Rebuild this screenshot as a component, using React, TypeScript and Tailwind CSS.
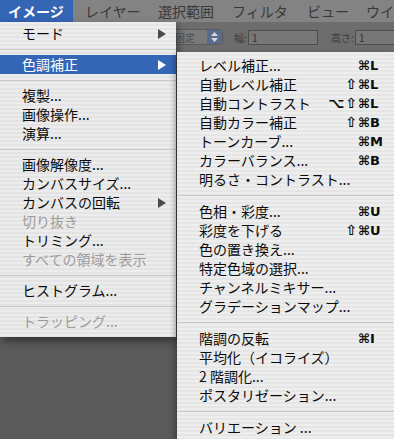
import React from "react";

type Row =
  | { sep: true }
  | { label: string; sep?: false; disabled?: boolean; arrow?: boolean; active?: boolean; mods?: string; key?: string };

const SEP: Row = { sep: true };

const mainItems: Row[] = [
  { label: "モード", arrow: true },
  SEP,
  { label: "色調補正", arrow: true, active: true },
  SEP,
  { label: "複製..." },
  { label: "画像操作..." },
  { label: "演算..." },
  SEP,
  { label: "画像解像度..." },
  { label: "カンバスサイズ..." },
  { label: "カンバスの回転", arrow: true },
  { label: "切り抜き", disabled: true },
  { label: "トリミング..." },
  { label: "すべての領域を表示", disabled: true },
  SEP,
  { label: "ヒストグラム..." },
  SEP,
  { label: "トラッピング...", disabled: true },
];

const subItems: Row[] = [
  { label: "レベル補正...", mods: "", key: "L" },
  { label: "自動レベル補正", mods: "⇧", key: "L" },
  { label: "自動コントラスト", mods: "⌥⇧", key: "L" },
  { label: "自動カラー補正", mods: "⇧", key: "B" },
  { label: "トーンカーブ...", mods: "", key: "M" },
  { label: "カラーバランス...", mods: "", key: "B" },
  { label: "明るさ・コントラスト..." },
  SEP,
  { label: "色相・彩度...", mods: "", key: "U" },
  { label: "彩度を下げる", mods: "⇧", key: "U" },
  { label: "色の置き換え..." },
  { label: "特定色域の選択..." },
  { label: "チャンネルミキサー..." },
  { label: "グラデーションマップ..." },
  SEP,
  { label: "階調の反転", mods: "", key: "I" },
  { label: "平均化（イコライズ）" },
  { label: "2 階調化..." },
  { label: "ポスタリゼーション..." },
  SEP,
  { label: "バリエーション ..." },
];

function Arrow({ color }: { color: string }) {
  return (
    <svg width="8" height="10" viewBox="0 0 8 10">
      <polygon points="0,0 8,5 0,10" fill={color} />
    </svg>
  );
}

function MainMenu() {
  return (
    <div className="absolute left-0 top-[22px] w-[176px] pt-[2px] pb-[6px] bg-[repeating-linear-gradient(to_bottom,rgba(247,247,247,0.93)_0px,rgba(247,247,247,0.93)_2px,rgba(238,238,238,0.93)_2px,rgba(238,238,238,0.93)_4px)] shadow-[2px_4px_8px_rgba(0,0,0,0.45)]">
      {mainItems.map((it, i) =>
        it.sep ? (
          <div key={i} className="h-[12px] flex items-center">
            <div className="h-px w-full bg-[#c9c9c9]" />
          </div>
        ) : (
          <div
            key={i}
            className={
              it.active
                ? "h-[19px] flex items-center pl-[22px] pr-[10px] bg-[#3565b5] text-white"
                : it.disabled
                ? "h-[19px] flex items-center pl-[22px] pr-[10px] text-[#9c9c9c]"
                : "h-[19px] flex items-center pl-[22px] pr-[10px] text-[#0c0c0c]"
            }
          >
            <span className="flex-1 leading-[19px]">{it.label}</span>
            {it.arrow && <Arrow color={it.active ? "#ffffff" : "#4a4a4a"} />}
          </div>
        )
      )}
    </div>
  );
}

function SubMenu() {
  return (
    <div className="absolute left-[177px] top-[52px] w-[217px] h-[400px] pt-[4px] bg-[repeating-linear-gradient(to_bottom,rgba(247,247,247,0.94)_0px,rgba(247,247,247,0.94)_2px,rgba(238,238,238,0.94)_2px,rgba(238,238,238,0.94)_4px)] shadow-[-2px_2px_6px_rgba(0,0,0,0.35)]">
      {subItems.map((it, i) =>
        it.sep ? (
          <div key={i} className="h-[13px] flex items-center">
            <div className="h-px w-full bg-[#c9c9c9]" />
          </div>
        ) : (
          <div key={i} className="h-[19px] flex items-center pl-[22px] text-[#0c0c0c]">
            <span className="flex-1 leading-[19px] whitespace-nowrap">{it.label}</span>
            {it.key && (
              <>
                <span className="w-[40px] shrink-0 text-right font-['DejaVu_Sans',sans-serif] font-bold text-[14px] leading-[19px] tracking-[1px]">
                  {it.mods}
                </span>
                <span className="w-[36px] shrink-0 font-['DejaVu_Sans',sans-serif] font-bold text-[13px] leading-[19px] whitespace-nowrap">
                  ⌘{it.key}
                </span>
              </>
            )}
          </div>
        )
      )}
    </div>
  );
}

function Toolbar() {
  return (
    <div className="h-[30px] bg-[#6d6d6d] flex items-center text-[10px] text-[#3a3a3a] whitespace-nowrap">
      <span className="ml-[93px] w-[35px] shrink-0">スタイル:</span>
      <div className="w-[95px] h-[16px] shrink-0 rounded-[4px] border border-[#5a5a5a] bg-[#7a7a7a] flex items-center">
        <span className="flex-1 pl-[6px] text-[#4a4a4a]">縦横比を固定</span>
        <div className="w-[15px] h-full rounded-r-[4px] bg-[#586b8c] flex items-center justify-center">
          <svg width="7" height="10" viewBox="0 0 7 10">
            <polygon points="3.5,0 7,4 0,4" fill="#d8d8d8" />
            <polygon points="0,6 7,6 3.5,10" fill="#d8d8d8" />
          </svg>
        </div>
      </div>
      <span className="ml-[11px] w-[14px] shrink-0">幅:</span>
      <div className="w-[70px] h-[15px] shrink-0 bg-[#777777] border border-[#4c4c4c] pl-[3px] leading-[13px] text-[#333]">1</div>
      <span className="ml-[13px] w-[24px] shrink-0">高さ:</span>
      <div className="w-[70px] h-[15px] shrink-0 bg-[#777777] border border-[#4c4c4c] pl-[3px] leading-[13px] text-[#333]">1</div>
    </div>
  );
}

function MenuBar() {
  return (
    <div className="h-[22px] bg-[#838383] flex items-stretch text-[14px] text-[#383838] whitespace-nowrap">
      <div className="w-[73px] shrink-0 bg-[#3565b5] text-white font-bold pl-[8px] flex items-center">イメージ</div>
      <div className="w-[85px] shrink-0 pl-[12px] flex items-center">レイヤー</div>
      <div className="w-[74px] shrink-0 flex items-center">選択範囲</div>
      <div className="w-[75px] shrink-0 flex items-center">フィルタ</div>
      <div className="w-[59px] shrink-0 flex items-center">ビュー</div>
      <div className="shrink-0 flex items-center">ウイ</div>
    </div>
  );
}

export default function App() {
  return (
    <div className="relative w-[394px] h-[439px] overflow-hidden bg-[#5a5a5a] font-['Noto_Sans_CJK_JP',sans-serif] text-[14px]">
      <MenuBar />
      <Toolbar />
      <MainMenu />
      <SubMenu />
    </div>
  );
}
